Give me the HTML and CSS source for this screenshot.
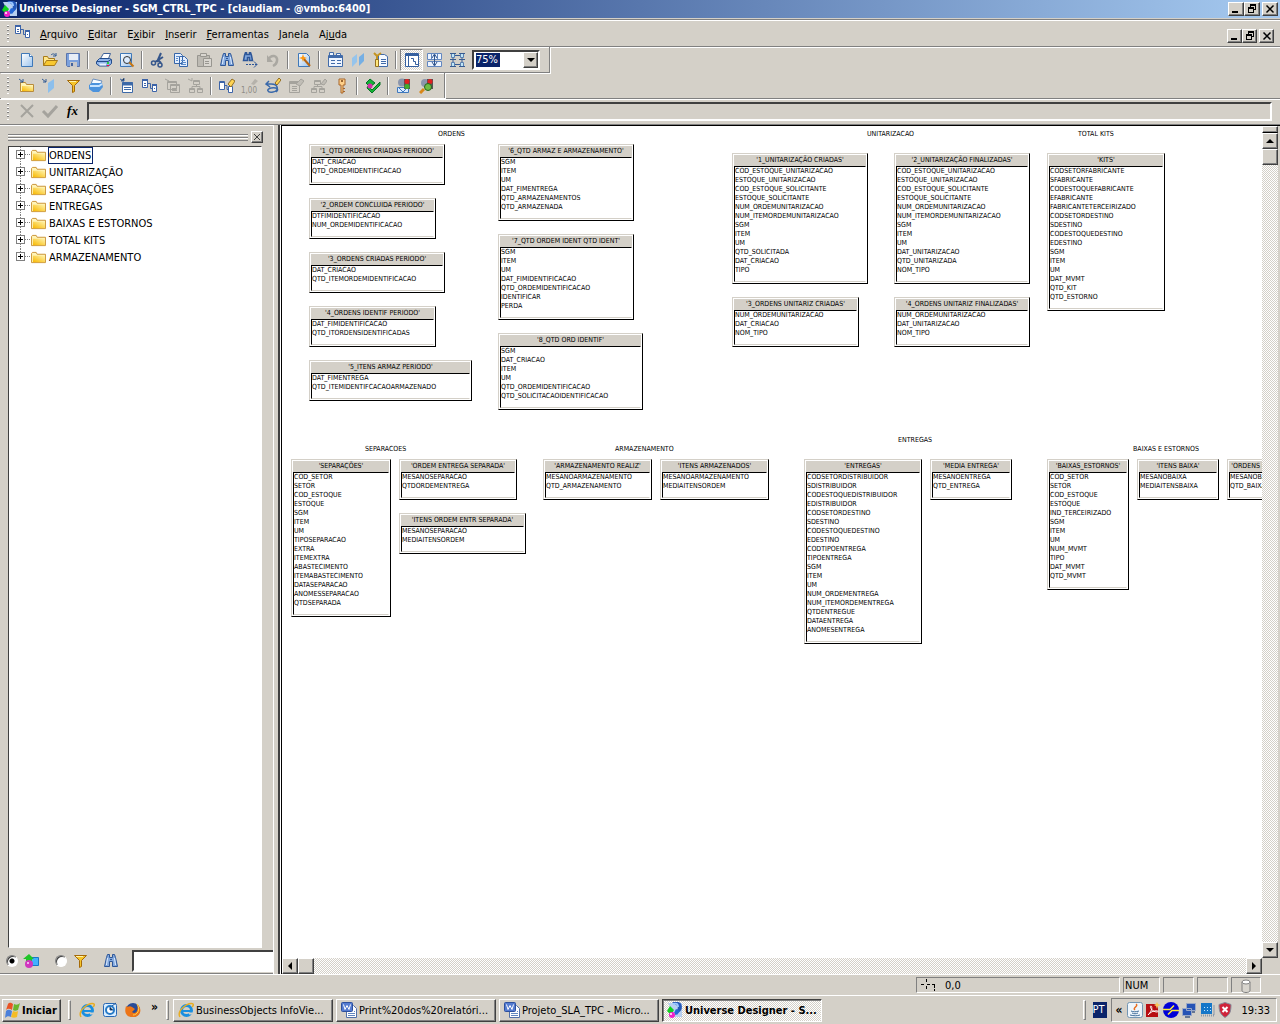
FILE: index.html
```html
<!DOCTYPE html>
<html lang="pt-BR">
<head>
<meta charset="utf-8">
<title>Universe Designer - SGM_CTRL_TPC</title>
<link rel="stylesheet" href="styles.css">
</head>
<body>
<svg class="defs" aria-hidden="true">
  <defs>
    <linearGradient id="gold" x1="0" y1="1" x2="1" y2="0"><stop offset="0" stop-color="#f8b800"/><stop offset="1" stop-color="#fff4b0"/></linearGradient>
    <linearGradient id="sky" x1="0" y1="0" x2="1" y2="1"><stop offset="0" stop-color="#fff"/><stop offset="1" stop-color="#9cc4ee"/></linearGradient>
    <symbol id="i-app" viewBox="0 0 16 16"><path d="M1 1h14v14H8z" fill="#b8d0f0"/><path d="M5 0h6c5 0 5 9 1 10l-4 3V9c3 0 4-5 1-6z" fill="#2458b8"/><path d="M6 2c4-1 5 0 5 3" stroke="#9cc8ff" stroke-width="2" fill="none"/><path d="M3 4l4 4-3 5-4-4z" fill="#10d020"/><path d="M9 7l4 2-3 4-3-2z" fill="#2468d8"/><circle cx="5" cy="13" r="3" fill="#f020c8"/><circle cx="4" cy="12" r="1" fill="#fff"/></symbol>
    <symbol id="i-schema" viewBox="0 0 16 16"><path d="M.5 1.500h5v8h-5zM10.500 6.500h4v7h-4z" fill="#fff" stroke="#3d64a8"/><path d="M0 2h6M10 7h5" stroke="#3d64a8" stroke-width="2"/><path d="M6 5.500h2.500v5H10M2 5.500h2M2 7.500h2M12 10.500h1" stroke="#3d64a8" fill="none"/></symbol>
    <symbol id="i-new" viewBox="0 0 16 16"><path d="M2.500 1.500h8l3 3v10h-11z" fill="url(#sky)" stroke="#3f78b8"/><path d="M10.500 1.500v3h3" fill="#fff" stroke="#3f78b8"/></symbol>
    <symbol id="i-open" viewBox="0 0 16 16"><path d="M1.500 13.500v-9h4l1 2h6v2" fill="#ffe68a" stroke="#a87a18"/><path d="M1.500 13.500l3-5h11l-3 5z" fill="#f8c830" stroke="#a87a18"/><path d="M9 3c2-2 4-1 5 1m0-3v3h-3" stroke="#315a94" fill="none"/></symbol>
    <symbol id="i-save" viewBox="0 0 16 16"><path d="M1.500 1.500h13v13h-12l-1-1z" fill="#7ba0dc" stroke="#5b75ac"/><path d="M4 2h9v6H4z" fill="#e7edf7"/><path d="M5 10h7v5H5z" fill="#c7c7ca"/><path d="M6 11h2v3H6z" fill="#42629d"/></symbol>
    <symbol id="i-print" viewBox="0 0 16 16"><path d="M4.500 6.500l3-5h7l-2 5z" fill="#fff" stroke="#3c6098"/><path d="M.5 9.500l3-3h10l2 1v4l-3 2.500h-9l-3-2z" fill="#8fb4ea" stroke="#244d8c"/><path d="M1 9.500h11l3-2" stroke="#244d8c" fill="none"/><path d="M3 11.500h7v2H4z" fill="#e7f2ff"/><path d="M11 10h2v2h-2z" fill="#2bc944"/><path d="M11 13.500h2" stroke="#f04"/></symbol>
    <symbol id="i-preview" viewBox="0 0 16 16"><path d="M1.500 1.500h11v13h-11z" fill="url(#sky)" stroke="#3f78b8"/><circle cx="8" cy="8" r="3.500" fill="#dcecff" stroke="#333"/><path d="M10.500 10.500l4 4" stroke="#c87610" stroke-width="2"/></symbol>
    <symbol id="i-cut" viewBox="0 0 16 16"><path d="M11 1L7 10M13 5L5 10M8 8l3 3" stroke="#36568b" stroke-width="2" fill="none"/><circle cx="3.500" cy="11" r="2" fill="none" stroke="#36568b" stroke-width="1.500"/><circle cx="10" cy="13" r="2" fill="none" stroke="#36568b" stroke-width="1.500"/></symbol>
    <symbol id="i-copy" viewBox="0 0 16 16"><path d="M1.500 1.500h6l2 2v8h-8zM6.500 4.500h5l3 3v7h-8z" fill="#e4efff" stroke="#3565a9"/><path d="M8 8.500h4M8 10.500h5M8 12.500h5M3 4.500h3M3 6.500h2M3 8.500h2" stroke="#5b8ccb"/></symbol>
    <symbol id="i-paste" viewBox="0 0 16 16"><path d="M1.500 3.500h12v11h-12z" fill="#bdbab3" stroke="#989690"/><path d="M4.500 1.500h6v3h-6z" fill="#d9d6d0" stroke="#989690"/><path d="M7.500 6.500h8v8h-8z" fill="#d9d6d0" stroke="#989690"/><path d="M9 9.500h4M9 11.500h4" stroke="#989690"/></symbol>
    <symbol id="i-find" viewBox="0 0 16 16"><path d="M4.500 1.500h2v3h3v-3h2l1 3 2 9h-5v-5h-3v5h-5l2-9z" fill="#83a9de" stroke="#2d5698"/><path d="M4.500 5l-1 7M11.500 5l1 7" stroke="#e0edff"/><path d="M7 6.500h2" stroke="#2d5698"/></symbol>
    <symbol id="i-findnext" viewBox="0 0 16 16"><path d="M3.500.5h1v2h3v-2h1l1 3 1 5h-3v-3h-2v3h-4l1-5z" fill="#83a9de" stroke="#2d5698" stroke-width="1.500"/><path d="M4 12.500h11" stroke="#2d5698" stroke-dasharray="2 1"/><path d="M12 9.500l3 3-3 3" stroke="#2d5698" fill="none"/></symbol>
    <symbol id="i-undo" viewBox="0 0 16 16"><path d="M3 8c3-6 10-5 9 1-.4 3-2 4-4 5" fill="none" stroke="#aaa8a2" stroke-width="2.500"/><path d="M2 3v7h6z" fill="#aaa8a2"/></symbol>
    <symbol id="i-wizard" viewBox="0 0 16 16"><path d="M2.500 1.500h8l3 3v10h-11z" fill="url(#sky)" stroke="#3f78b8"/><path d="M7 6l7 8" stroke="#b56512" stroke-width="2"/><path d="M7 2l1 3 3 1-3 1-1 3-1-3-3-1 3-1z" fill="#ff9810"/></symbol>
    <symbol id="i-params" viewBox="0 0 16 16"><path d="M1.500 3.500h14v11h-14zM2.500.5h4v3h-4zM9.500 1.500h4v2h-4z" fill="#eef5ff" stroke="#416ba9"/><path d="M2 5h13" stroke="#416ba9" stroke-width="2"/><path d="M4 8.500h4M10 8.500h4M4 11.500h4M10 11.500h4" stroke="#416ba9"/></symbol>
    <symbol id="i-planes" viewBox="0 0 16 16"><path d="M2 6l5-4v8l-5 5z" fill="#95c4ec"/><path d="M9 5l5-4v8l-5 5z" fill="#75afe4"/></symbol>
    <symbol id="i-list" viewBox="0 0 16 16"><path d="M5.500 2.500h6l3 2v10h-9z" fill="#f5f9ff" stroke="#416ba9"/><path d="M8 7.500h5M8 9.500h5M8 11.500h5" stroke="#416ba9"/><path d="M1 1l3 3 4-3M4 4v3" stroke="#c49422" stroke-width="2" fill="none"/><path d="M2.500 7.500h3v7h-3z" fill="#ffe77b" stroke="#947020"/></symbol>
    <symbol id="i-layout" viewBox="0 0 16 16"><path d="M1.500 1.500h13v13h-13z" fill="#fff" stroke="#36609f"/><path d="M2 3h12" stroke="#36609f" stroke-width="2"/><path d="M4.500 4v10M7 6.500h2.500v3h2v3H14" fill="none" stroke="#36609f"/></symbol>
    <symbol id="i-split" viewBox="0 0 16 16"><path d="M.5 1.500h14v6H.5zM.5 9.500h14v5H.5z" fill="#edf4ff" stroke="#6287c0"/><path d="M4.500 2v5M10.500 2v5" stroke="#6287c0"/><path d="M7.500 3v10M5 6l2.500-4L10 6M5 10l2.500 4L10 10" stroke="#31558d" fill="none"/></symbol>
    <symbol id="i-arrange" viewBox="0 0 16 16"><path d="M1.500 1.500h3v4h-3zM10.500 1.500h3v4h-3zM1.500 10.500h3v4h-3zM10.500 10.500h3v4h-3z" fill="#bfe6f7" stroke="#5c80b0"/><path d="M0 1.500h6M9 1.500h6M0 14.500h6M9 14.500h6M5 3.500h5M5 12.500h5M3 6v4M12 6v4M0 7.500h6M9 7.500h6" stroke="#365b91"/></symbol>
    <symbol id="i-folder" viewBox="0 0 16 16"><path d="M1.500 13.500v-9h5l1 2h7v7z" fill="#fff4b8" stroke="#b98b3a"/><path d="M3 8h11v5H3z" fill="url(#gold)"/><path d="M0 1l4 3M4 1v3H1" stroke="#315a94" fill="none"/></symbol>
    <symbol id="i-tree" viewBox="0 0 16 14"><path d="M.5 12.500v-10l1-1h4l1 2h9v9z" fill="#fff4b8" stroke="#c89030"/><path d="M2 5h13v7H2z" fill="url(#gold)"/></symbol>
    <symbol id="i-plane" viewBox="0 0 16 16"><path d="M6 5l6-4v9l-6 5z" fill="#8cbfec"/><path d="M0 1l4 3M4 1v3H1" stroke="#315a94" fill="none"/></symbol>
    <symbol id="i-funnel" viewBox="0 0 16 16"><path d="M2.500 2.500h12l-5 5v6l-2 1v-7z" fill="#f6c52b" stroke="#a56a08"/><path d="M4 3.500h7" stroke="#fff3ad"/></symbol>
    <symbol id="i-cube" viewBox="0 0 16 16"><path d="M5 1l9 2-2 4-9-1z" fill="#f7fbff" stroke="#6b8fbd"/><path d="M1 7l3-2h10l1 4-4 5H5l-4-3z" fill="#4c93dd"/><path d="M2 8h9l3-2" stroke="#c8e4ff" stroke-width="2" fill="none"/></symbol>
    <symbol id="i-table" viewBox="0 0 16 16"><path d="M3.500 4.500h10v10h-10z" fill="#fff" stroke="#3c69a8"/><path d="M3 6h11" stroke="#3c69a8" stroke-width="3"/><path d="M5 9.500h7M5 11.500h7M1 1l4 2M5 0v3H2" stroke="#3c69a8"/></symbol>
    <symbol id="i-tableoff" viewBox="0 0 16 16"><path d="M2.500 3.500h9v8h-9zM5.500 6.500h9v8h-9z" fill="#d4d0c8" stroke="#a5a39d"/><path d="M5 7.500h9M7 10.500h5M7 12.500h5M0 1l4 2M3 4.500h8" stroke="#a5a39d"/></symbol>
    <symbol id="i-treeoff" viewBox="0 0 16 16"><path d="M5.500 2.500h6v4h-6zM1.500 10.500h5v4h-5zM9.500 10.500h5v4h-5z" fill="#d4d0c8" stroke="#a5a39d"/><path d="M8.500 7v1.500M4 10V8.500h8V10M0 1l4 2M4 0v3M5 3.500h7M1 11.500h6M9 11.500h6" fill="none" stroke="#a5a39d"/></symbol>
    <symbol id="i-joinwiz" viewBox="0 0 16 16"><path d="M.5 3.500h5v8h-5zM9.500 8.500h4v6h-4z" fill="#fff" stroke="#3d64a8"/><path d="M0 4.500h6M6 7.500h2v4h2" stroke="#3d64a8" fill="none"/><path d="M9 6l4-5 3 2-4 6z" fill="#ffd452" stroke="#926e24"/></symbol>
    <symbol id="i-aliaswiz" viewBox="0 0 16 16"><path d="M1.500 3.500h10v11h-10z" fill="#d4d0c8" stroke="#a5a39d"/><path d="M2 5h9" stroke="#a5a39d" stroke-width="2"/><path d="M4 8.500h5M4 10.500h5M4 12.500h5" stroke="#a5a39d"/><path d="M8 6l5-5 3 2-4 5z" fill="#c0bdb6" stroke="#a5a39d"/></symbol>
    <symbol id="i-contextwiz" viewBox="0 0 16 16"><path d="M3.500 2.500h6v4h-6zM.5 10.500h5v4h-5zM8.500 10.500h5v4h-5z" fill="#d4d0c8" stroke="#a5a39d"/><path d="M6.500 7v1.500M3 10V8.500h8V10M3 3.500h7M0 11.500h6M8 11.500h6" fill="none" stroke="#a5a39d"/><path d="M10 6l4-5 2 2-3 4z" fill="#c0bdb6" stroke="#a5a39d"/></symbol>
    <symbol id="i-loop" viewBox="0 0 16 16"><path d="M4 3L1 6l4 3M2 6h4c8 0 8 7 2 8s-7-3-2-4 9 1 5 4" stroke="#3a69aa" stroke-width="1.500" fill="none"/><path d="M10 5l4-5 2 2-4 5z" fill="#ffd452" stroke="#926e24"/></symbol>
    <symbol id="i-key" viewBox="0 0 16 16"><path d="M5 1h6v6H9v8H7V7H5z" fill="#ffd08a" stroke="#a7662c"/><circle cx="8" cy="3" r="1" fill="#7a4210"/><path d="M9 10.500h2M9 13.500h2" stroke="#a7662c"/></symbol>
    <symbol id="i-check" viewBox="0 0 16 16"><path d="M5 1l5 4-5 4-4-4z" fill="#14b43a" stroke="#087028"/><path d="M3 8l4 4 8-8v3l-8 8-5-5z" fill="#16b334" stroke="#087028"/><circle cx="5" cy="8" r="2.500" fill="#d42faa"/></symbol>
    <symbol id="i-users" viewBox="0 0 16 16"><circle cx="6" cy="4.500" r="4" fill="#8c96ac"/><path d="M1.500 9.500h11v5h-11z" fill="#d9eaff" stroke="#3f79bd"/><path d="M3 10l4 4 4-4" stroke="#3f79bd" fill="none"/><path d="M8 1h6v10H8z" fill="#555"/><circle cx="11" cy="3.500" r="2.500" fill="#e02020"/><circle cx="11" cy="8.500" r="2.500" fill="#42ae2c"/></symbol>
    <symbol id="i-users2" viewBox="0 0 16 16"><circle cx="6" cy="5" r="4" fill="#8c96ac"/><path d="M8 1h6v10H8z" fill="#555"/><circle cx="11" cy="3.500" r="2.500" fill="#e02020"/><circle cx="9" cy="9" r="3.500" fill="#70bc45" stroke="#27651e"/><path d="M5 11l-4 4" stroke="#d88818" stroke-width="3"/></symbol>
    <symbol id="i-objects" viewBox="0 0 16 16"><path d="M7.500 4.500h8v8h-8z" fill="#42b0ff" stroke="#1677c8"/><path d="M6 1l5 5H9v3H3V6H0z" fill="#20c528"/><circle cx="6" cy="11" r="4" fill="#d035be"/><circle cx="5" cy="10" r="1" fill="#ffd0ff"/></symbol>
    <symbol id="i-ie" viewBox="0 0 16 16"><circle cx="8.500" cy="8.500" r="5" fill="none" stroke="#1a8fe0" stroke-width="3"/><path d="M5 9h9" stroke="#1a8fe0" stroke-width="2"/><path d="M11 10.500h4v2h-4z" fill="#d4d0c8"/><path d="M2 15C-2 8 12-1 15 2c1 1 0 2-1 3" fill="none" stroke="#e9ad22" stroke-width="1.500"/></symbol>
    <symbol id="i-mail" viewBox="0 0 16 16"><rect x="1.500" y="1.500" width="13" height="13" rx="2" fill="#d8edff" stroke="#2868b5"/><circle cx="8" cy="8" r="4" fill="#fff" stroke="#277ac6" stroke-width="2"/><path d="M8 5v3h3M10 4l4-3" stroke="#185299"/></symbol>
    <symbol id="i-fox" viewBox="0 0 16 16"><circle cx="8" cy="8" r="7" fill="#294c98"/><path d="M1 4c2 2 3-1 6 1l3 2-3 3c4 3 7-2 5-8 7 6 2 14-5 13C1 15-1 10 1 4z" fill="#ed7518"/><path d="M12 2c4 6 0 11-4 11" stroke="#ffd34e" fill="none"/></symbol>
    <symbol id="i-word" viewBox="0 0 16 16"><path d="M5.500 3.500h7l3 3v9h-10z" fill="#fff" stroke="#5270a8"/><path d="M7 11.500h7M7 13.500h7M13 9.500h1" stroke="#6287bf"/><rect x=".5" y=".5" width="11" height="9" rx="1" fill="#547bd0" stroke="#2d509c"/><path d="M2.500 2.500l1.500 5 2-4 2 4 1.500-5" fill="none" stroke="#fff"/></symbol>
    <symbol id="i-win" viewBox="0 0 16 16"><path d="M3 2c2-2 3-1 5 0L7 8C5 7 3 6 1 8z" fill="#e95424"/><path d="M9 2c2 1 4 1 6-1l-2 7c-2 1-4 1-5 0z" fill="#6ab52c"/><path d="M1 9c2-2 4-1 6 0l-1 6c-2-1-4-1-6 1z" fill="#4b80da"/><path d="M8 9c2 1 4 1 5 0l-1 6c-2 1-4 1-6 0z" fill="#f5bc25"/></symbol>
    <symbol id="i-java" viewBox="0 0 16 16"><rect x=".5" y=".5" width="15" height="15" rx="2" fill="#eef5fb" stroke="#7496b3"/><path d="M9 2c3 2-4 4-1 6" stroke="#e86d20" stroke-width="1.500" fill="none"/><path d="M4 9c2 1 5 1 8 0M5 11c2 1 4 1 6 0M3 13c4 1 7 1 10 0" stroke="#426f9a" fill="none"/></symbol>
    <symbol id="i-pdf" viewBox="0 0 16 16"><path d="M1 2h12v13H1z" fill="#b70e12"/><path d="M3 13c5-5 4-9 3-9-2 0 1 6 6 6 2 0 1-2-2-1-3 0-5 2-7 4z" fill="none" stroke="#fff"/><path d="M12 0l1 2 3 1-3 1-1 3-1-3-2-1 2-1z" fill="#f9c75d"/></symbol>
    <symbol id="i-blue" viewBox="0 0 16 16"><circle cx="8" cy="8" r="8" fill="#0000d8"/><path d="M0 7.500h7l4-4M5 12.500l4-4h7" stroke="#ffec38" stroke-width="1.500" fill="none"/></symbol>
    <symbol id="i-net" viewBox="0 0 16 16"><path d="M5.500 1.500h9v7h-9zM1.500 6.500h9v7h-9z" fill="#2653b5" stroke="#9aa8c6"/><path d="M4 15h5M11 10h3" stroke="#657694" stroke-width="2"/></symbol>
    <symbol id="i-chip" viewBox="0 0 16 16"><path d="M2 1h11v11H2z" fill="#1577c8"/><path d="M2 13.500h13V3" stroke="#8a98a8" stroke-dasharray="1 1" stroke-width="2" fill="none"/><path d="M5 5.500h1M8 5.500h1M11 5.500h1M5 8.500h1M8 8.500h1M11 8.500h1" stroke="#c3e6ff"/></symbol>
    <symbol id="i-shield" viewBox="0 0 16 16"><path d="M8 .5l6 2c0 7-1 10-6 13C3 12 2 9 2 2.500z" fill="#cf2339" stroke="#858b99"/><path d="M5.500 5l5 5M10.500 5l-5 5" stroke="#fff" stroke-width="2"/></symbol>
    <symbol id="i-min" viewBox="0 0 12 10"><path d="M2 7h6v2H2z"/></symbol>
    <symbol id="i-restore" viewBox="0 0 12 10"><path d="M4 0h6v6H8v3H2V3h2zm1 2v1h3v2h1V2zM3 5v3h4V5z" fill-rule="evenodd"/></symbol>
    <symbol id="i-close" viewBox="0 0 12 10"><path d="M2.500 1.500l7 7M9.500 1.500l-7 7" stroke="#000" stroke-width="1.500"/></symbol>
    <symbol id="i-up" viewBox="0 0 8 8"><path d="M4 2l4 4H0z"/></symbol>
    <symbol id="i-down" viewBox="0 0 8 8"><path d="M0 2h8L4 6z"/></symbol>
    <symbol id="i-left" viewBox="0 0 8 8"><path d="M2 4l4-4v8z"/></symbol>
    <symbol id="i-right" viewBox="0 0 8 8"><path d="M6 4L2 0v8z"/></symbol>
  </defs>
</svg>

<header class="titlebar">
  <svg class="ico"><use href="#i-app"/></svg>
  <h1>Universe Designer - SGM_CTRL_TPC - [claudiam - @vmbo:6400]</h1>
  <div class="winbtns">
    <button aria-label="Minimizar"><svg><use href="#i-min"/></svg></button><button aria-label="Restaurar"><svg><use href="#i-restore"/></svg></button><button class="x" aria-label="Fechar"><svg><use href="#i-close"/></svg></button>
  </div>
</header>

<nav class="menubar">
  <span class="grip"></span>
  <svg class="ico"><use href="#i-schema"/></svg>
  <button><u>A</u>rquivo</button><button><u>E</u>ditar</button><button>E<u>x</u>ibir</button><button><u>I</u>nserir</button><button><u>F</u>erramentas</button><button><u>J</u>anela</button><button>Aj<u>u</u>da</button>
  <div class="winbtns">
    <button aria-label="Minimizar documento"><svg><use href="#i-min"/></svg></button><button aria-label="Restaurar documento"><svg><use href="#i-restore"/></svg></button><button class="x" aria-label="Fechar documento"><svg><use href="#i-close"/></svg></button>
  </div>
</nav>

<div class="toolbars">
  <div class="toolbar" role="toolbar" aria-label="Padrão">
    <span class="grip"></span>
    <button class="tool" aria-label="Novo"><svg class="ico"><use href="#i-new"/></svg></button>
    <button class="tool" aria-label="Abrir"><svg class="ico"><use href="#i-open"/></svg></button>
    <button class="tool" aria-label="Salvar"><svg class="ico"><use href="#i-save"/></svg></button>
    <span class="sep"></span>
    <button class="tool" aria-label="Imprimir"><svg class="ico"><use href="#i-print"/></svg></button>
    <button class="tool" aria-label="Visualizar impressão"><svg class="ico"><use href="#i-preview"/></svg></button>
    <span class="sep"></span>
    <button class="tool" aria-label="Recortar"><svg class="ico"><use href="#i-cut"/></svg></button>
    <button class="tool" aria-label="Copiar"><svg class="ico"><use href="#i-copy"/></svg></button>
    <button class="tool" aria-label="Colar"><svg class="ico"><use href="#i-paste"/></svg></button>
    <button class="tool" aria-label="Localizar"><svg class="ico"><use href="#i-find"/></svg></button>
    <button class="tool" aria-label="Localizar próximo"><svg class="ico"><use href="#i-findnext"/></svg></button>
    <button class="tool" aria-label="Desfazer"><svg class="ico"><use href="#i-undo"/></svg></button>
    <span class="sep"></span>
    <button class="tool" aria-label="Assistente"><svg class="ico"><use href="#i-wizard"/></svg></button>
    <span class="sep"></span>
    <button class="tool" aria-label="Parâmetros"><svg class="ico"><use href="#i-params"/></svg></button>
    <button class="tool" aria-label="Contextos"><svg class="ico"><use href="#i-planes"/></svg></button>
    <button class="tool" aria-label="Lista de valores"><svg class="ico"><use href="#i-list"/></svg></button>
    <span class="sep"></span>
    <button class="tool pressed" aria-label="Painel do universo"><svg class="ico"><use href="#i-layout"/></svg></button>
    <button class="tool" aria-label="Dividir"><svg class="ico"><use href="#i-split"/></svg></button>
    <button class="tool" aria-label="Organizar tabelas"><svg class="ico"><use href="#i-arrange"/></svg></button>
    <div class="combo"><select aria-label="Zoom"><option>75%</option></select><span class="arrow"><svg><use href="#i-down"/></svg></span></div>
  </div>
  <div class="toolbar second" role="toolbar" aria-label="Edição">
    <span class="grip"></span>
    <button class="tool" aria-label="Inserir classe"><svg class="ico"><use href="#i-folder"/></svg></button>
    <button class="tool" aria-label="Inserir objeto"><svg class="ico"><use href="#i-plane"/></svg></button>
    <button class="tool" aria-label="Inserir condição"><svg class="ico"><use href="#i-funnel"/></svg></button>
    <button class="tool" aria-label="Hierarquias"><svg class="ico"><use href="#i-cube"/></svg></button>
    <span class="sep"></span>
    <button class="tool" aria-label="Inserir tabela"><svg class="ico"><use href="#i-table"/></svg></button>
    <button class="tool" aria-label="Inserir junção"><svg class="ico"><use href="#i-schema"/></svg></button>
    <button class="tool" aria-label="Inserir alias"><svg class="ico"><use href="#i-tableoff"/></svg></button>
    <button class="tool" aria-label="Inserir contexto"><svg class="ico"><use href="#i-treeoff"/></svg></button>
    <span class="sep"></span>
    <button class="tool" aria-label="Detectar junções"><svg class="ico"><use href="#i-joinwiz"/></svg></button>
    <button class="tool" aria-label="Detectar cardinalidades"><svg class="ico" viewBox="0 0 16 16"><text class="card" x="-1" y="15">1,00</text><path d="M9 6l4-5 3 2-4 4z" fill="#b5b2ab"/></svg></button>
    <button class="tool" aria-label="Detectar loops"><svg class="ico"><use href="#i-loop"/></svg></button>
    <button class="tool" aria-label="Detectar alias"><svg class="ico"><use href="#i-aliaswiz"/></svg></button>
    <button class="tool" aria-label="Detectar contextos"><svg class="ico"><use href="#i-contextwiz"/></svg></button>
    <button class="tool" aria-label="Chaves"><svg class="ico"><use href="#i-key"/></svg></button>
    <span class="sep"></span>
    <button class="tool" aria-label="Verificar integridade"><svg class="ico"><use href="#i-check"/></svg></button>
    <span class="sep"></span>
    <button class="tool" aria-label="Usuários"><svg class="ico"><use href="#i-users"/></svg></button>
    <button class="tool" aria-label="Restrições"><svg class="ico"><use href="#i-users2"/></svg></button>
  </div>
</div>

<div class="formula">
  <span class="grip"></span>
  <button class="tool" aria-label="Cancelar"><svg class="ico" viewBox="0 0 16 16"><path d="M2 2l12 12M14 2L2 14" stroke="#a5a39d" stroke-width="2"/></svg></button>
  <button class="tool" aria-label="Confirmar"><svg class="ico" viewBox="0 0 16 16"><path d="M1 8l5 5 9-10" stroke="#a5a39d" stroke-width="3" fill="none"/></svg></button>
  <button class="tool fx" aria-label="Fórmula"><i>fx</i></button>
  <input type="text" aria-label="Barra de fórmula">
</div>

<main class="workspace">
  <aside class="side">
    <div class="panelhead"><span class="bars"></span><button aria-label="Fechar painel"><svg viewBox="0 0 8 8"><path d="M1 1l6 6M7 1L1 7" stroke="#404040"/></svg></button></div>
    <ul class="tree">
      <li><span class="plus"></span><svg class="fold"><use href="#i-tree"/></svg><span class="name focus">ORDENS</span></li>
      <li><span class="plus"></span><svg class="fold"><use href="#i-tree"/></svg><span class="name">UNITARIZAÇÃO</span></li>
      <li><span class="plus"></span><svg class="fold"><use href="#i-tree"/></svg><span class="name">SEPARAÇÕES</span></li>
      <li><span class="plus"></span><svg class="fold"><use href="#i-tree"/></svg><span class="name">ENTREGAS</span></li>
      <li><span class="plus"></span><svg class="fold"><use href="#i-tree"/></svg><span class="name">BAIXAS E ESTORNOS</span></li>
      <li><span class="plus"></span><svg class="fold"><use href="#i-tree"/></svg><span class="name">TOTAL KITS</span></li>
      <li><span class="plus"></span><svg class="fold"><use href="#i-tree"/></svg><span class="name">ARMAZENAMENTO</span></li>
    </ul>
    <form class="filter">
      <label><input type="radio" name="view" aria-label="Classes e objetos" checked><svg class="ico"><use href="#i-objects"/></svg></label>
      <label><input type="radio" name="view" aria-label="Classes e condições"><svg class="ico"><use href="#i-funnel"/></svg></label>
      <svg class="ico"><use href="#i-find"/></svg>
      <input type="text" aria-label="Localizar">
    </form>
  </aside>
  <div class="splitter"></div>
  <section class="view">
    <div class="canvas">
      <h2 style="left:156px;top:4px">ORDENS</h2>
      <h2 style="left:585px;top:4px">UNITARIZACAO</h2>
      <h2 style="left:796px;top:4px">TOTAL KITS</h2>
      <h2 style="left:83px;top:319px">SEPARACOES</h2>
      <h2 style="left:333px;top:319px">ARMAZENAMENTO</h2>
      <h2 style="left:616px;top:310px">ENTREGAS</h2>
      <h2 style="left:851px;top:319px">BAIXAS E ESTORNOS</h2>

      <article style="left:27px;top:18px;width:136px"><h3>'1_QTD ORDENS CRIADAS PERIODO'</h3><ul><li>DAT_CRIACAO<li>QTD_ORDEMIDENTIFICACAO</ul></article>
      <article style="left:27px;top:72px;width:127px"><h3>'2_ORDEM CONCLUIDA PERIODO'</h3><ul><li>DTFIMIDENTIFICACAO<li>NUM_ORDEMIDENTIFICACAO</ul></article>
      <article style="left:27px;top:126px;width:136px"><h3>'3_ORDENS CRIADAS PERIODO'</h3><ul><li>DAT_CRIACAO<li>QTD_ITEMORDEMIDENTIFICACAO</ul></article>
      <article style="left:27px;top:180px;width:127px"><h3>'4_ORDENS IDENTIF PERIODO'</h3><ul><li>DAT_FIMIDENTIFICACAO<li>QTD_ITORDENSIDENTIFICADAS</ul></article>
      <article style="left:27px;top:234px;width:163px"><h3>'5_ITENS ARMAZ PERIODO'</h3><ul><li>DAT_FIMENTREGA<li>QTD_ITEMIDENTIFCACAOARMAZENADO</ul></article>
      <article style="left:216px;top:18px;width:136px"><h3>'6_QTD ARMAZ E ARMAZENAMENTO'</h3><ul><li>SGM<li>ITEM<li>UM<li>DAT_FIMENTREGA<li>QTD_ARMAZENAMENTOS<li>QTD_ARMAZENADA</ul></article>
      <article style="left:216px;top:108px;width:136px"><h3>'7_QTD ORDEM IDENT QTD IDENT'</h3><ul><li>SGM<li>ITEM<li>UM<li>DAT_FIMIDENTIFICACAO<li>QTD_ORDEMIDENTIFICACAO<li>IDENTIFICAR<li>PERDA</ul></article>
      <article style="left:216px;top:207px;width:145px"><h3>'8_QTD ORD IDENTIF'</h3><ul><li>SGM<li>DAT_CRIACAO<li>ITEM<li>UM<li>QTD_ORDEMIDENTIFICACAO<li>QTD_SOLICITACAOIDENTIFICACAO</ul></article>

      <article style="left:450px;top:27px;width:136px"><h3>'1_UNITARIZAÇÃO CRIADAS'</h3><ul><li>COD_ESTOQUE_UNITARIZACAO<li>ESTOQUE_UNITARIZACAO<li>COD_ESTOQUE_SOLICITANTE<li>ESTOQUE_SOLICITANTE<li>NUM_ORDEMUNITARIZACAO<li>NUM_ITEMORDEMUNITARIZACAO<li>SGM<li>ITEM<li>UM<li>QTD_SOLICITADA<li>DAT_CRIACAO<li>TIPO</ul></article>
      <article style="left:612px;top:27px;width:136px"><h3>'2_UNITARIZAÇÃO FINALIZADAS'</h3><ul><li>COD_ESTOQUE_UNITARIZACAO<li>ESTOQUE_UNITARIZACAO<li>COD_ESTOQUE_SOLICITANTE<li>ESTOQUE_SOLICITANTE<li>NUM_ORDEMUNITARIZACAO<li>NUM_ITEMORDEMUNITARIZACAO<li>SGM<li>ITEM<li>UM<li>DAT_UNITARIZACAO<li>QTD_UNITARIZADA<li>NOM_TIPO</ul></article>
      <article style="left:450px;top:171px;width:127px"><h3>'3_ORDENS UNITARIZ CRIADAS'</h3><ul><li>NUM_ORDEMUNITARIZACAO<li>DAT_CRIACAO<li>NOM_TIPO</ul></article>
      <article style="left:612px;top:171px;width:136px"><h3>'4_ORDENS UNITARIZ FINALIZADAS'</h3><ul><li>NUM_ORDEMUNITARIZACAO<li>DAT_UNITARIZACAO<li>NOM_TIPO</ul></article>
      <article style="left:765px;top:27px;width:118px"><h3>'KITS'</h3><ul><li>CODSETORFABRICANTE<li>SFABRICANTE<li>CODESTOQUEFABRICANTE<li>EFABRICANTE<li>FABRICANTETERCEIRIZADO<li>CODSETORDESTINO<li>SDESTINO<li>CODESTOQUEDESTINO<li>EDESTINO<li>SGM<li>ITEM<li>UM<li>DAT_MVMT<li>QTD_KIT<li>QTD_ESTORNO</ul></article>

      <article style="left:9px;top:333px;width:100px"><h3>'SEPARAÇÕES'</h3><ul><li>COD_SETOR<li>SETOR<li>COD_ESTOQUE<li>ESTOQUE<li>SGM<li>ITEM<li>UM<li>TIPOSEPARACAO<li>EXTRA<li>ITEMEXTRA<li>ABASTECIMENTO<li>ITEMABASTECIMENTO<li>DATASEPARACAO<li>ANOMESSEPARACAO<li>QTDSEPARADA</ul></article>
      <article style="left:117px;top:333px;width:118px"><h3>'ORDEM ENTREGA SEPARADA'</h3><ul><li>MESANOSEPARACAO<li>QTDORDEMENTREGA</ul></article>
      <article style="left:117px;top:387px;width:127px"><h3>'ITENS ORDEM ENTR SEPARADA'</h3><ul><li>MESANOSEPARACAO<li>MEDIAITENSORDEM</ul></article>
      <article style="left:261px;top:333px;width:109px"><h3>'ARMAZENAMENTO REALIZ'</h3><ul><li>MESANOARMAZENAMENTO<li>QTD_ARMAZENAMENTO</ul></article>
      <article style="left:378px;top:333px;width:109px"><h3>'ITENS ARMAZENADOS'</h3><ul><li>MESANOARMAZENAMENTO<li>MEDIAITENSORDEM</ul></article>
      <article style="left:522px;top:333px;width:118px"><h3>'ENTREGAS'</h3><ul><li>CODSETORDISTRIBUIDOR<li>SDISTRIBUIDOR<li>CODESTOQUEDISTRIBUIDOR<li>EDISTRIBUIDOR<li>CODSETORDESTINO<li>SDESTINO<li>CODESTOQUEDESTINO<li>EDESTINO<li>CODTIPOENTREGA<li>TIPOENTREGA<li>SGM<li>ITEM<li>UM<li>NUM_ORDEMENTREGA<li>NUM_ITEMORDEMENTREGA<li>QTDENTREGUE<li>DATAENTREGA<li>ANOMESENTREGA</ul></article>
      <article style="left:648px;top:333px;width:82px"><h3>'MEDIA ENTREGA'</h3><ul><li>MESANOENTREGA<li>QTD_ENTREGA</ul></article>
      <article style="left:765px;top:333px;width:82px"><h3>'BAIXAS_ESTORNOS'</h3><ul><li>COD_SETOR<li>SETOR<li>COD_ESTOQUE<li>ESTOQUE<li>IND_TERCEIRIZADO<li>SGM<li>ITEM<li>UM<li>NUM_MVMT<li>TIPO<li>DAT_MVMT<li>QTD_MVMT</ul></article>
      <article style="left:855px;top:333px;width:82px"><h3>'ITENS BAIXA'</h3><ul><li>MESANOBAIXA<li>MEDIAITENSBAIXA</ul></article>
      <article style="left:945px;top:333px;width:60px"><h3>'ORDENS BAIXA'</h3><ul><li>MESANOBAIXA<li>QTD_BAIXA</ul></article>
    </div>
    <div class="vbar"><span class="mini"></span><button aria-label="Rolar para cima"><svg><use href="#i-up"/></svg></button><span class="thumb"></span><span class="track"></span><button aria-label="Rolar para baixo"><svg><use href="#i-down"/></svg></button></div>
    <div class="hbar"><button aria-label="Rolar para a esquerda"><svg><use href="#i-left"/></svg></button><span class="thumb"></span><span class="track"></span><button aria-label="Rolar para a direita"><svg><use href="#i-right"/></svg></button></div>
  </section>
</main>

<footer class="status">
  <div class="cell coords"><svg class="ico" viewBox="0 0 16 16"><path d="M0 7.500h4M6 7.500h4M5.500 2v4M5.500 9v4M11 7.500h4M13.500 8v6" stroke="#000" stroke-dasharray="3 1"/></svg>0,0</div>
  <div class="cell num">NUM</div><div class="cell"></div><div class="cell"></div>
  <div class="cell db"><svg class="ico" viewBox="0 0 16 16"><path d="M4 4v9c1 2 7 2 8 0V4" fill="#d8d5ce" stroke="#808080"/><ellipse cx="8" cy="4" rx="4" ry="2" fill="#fff" stroke="#808080"/></svg></div>
</footer>

<footer class="taskbar">
  <button class="start"><svg class="ico"><use href="#i-win"/></svg>Iniciar</button>
  <span class="tsep"></span>
  <div class="quick">
    <a href="#ie" aria-label="Internet Explorer"><svg class="ico"><use href="#i-ie"/></svg></a>
    <a href="#mail" aria-label="Outlook"><svg class="ico"><use href="#i-mail"/></svg></a>
    <a href="#firefox" aria-label="Firefox"><svg class="ico"><use href="#i-fox"/></svg></a>
    <b>»</b>
  </div>
  <span class="tsep"></span>
  <div class="tasks">
    <button><svg class="ico"><use href="#i-ie"/></svg><span>BusinessObjects InfoVie...</span></button>
    <button><svg class="ico"><use href="#i-word"/></svg><span>Print%20dos%20relatóri...</span></button>
    <button><svg class="ico"><use href="#i-word"/></svg><span>Projeto_SLA_TPC - Micro...</span></button>
    <button class="active"><svg class="ico"><use href="#i-app"/></svg><span>Universe Designer - S...</span></button>
  </div>
  <span class="tsep"></span>
  <span class="lang">PT</span>
  <div class="tray">
    <b>«</b>
    <svg class="ico"><use href="#i-java"/></svg><svg class="ico"><use href="#i-pdf"/></svg><svg class="ico"><use href="#i-blue"/></svg><svg class="ico"><use href="#i-net"/></svg><svg class="ico"><use href="#i-chip"/></svg><svg class="ico"><use href="#i-shield"/></svg>
    <time>19:33</time>
  </div>
</footer>
</body>
</html>
```
FILE: styles.css
```css
:root {
  --face: #d4d0c8;
  --shade: #808080;
  --dark: #404040;
  --dither: repeating-conic-gradient(#d4d0c8 0 25%, #fff 0 50%) 0 0 / 2px 2px;
}
* { box-sizing: border-box; }
body {
  margin: 0;
  height: 100vh;
  display: flex;
  flex-direction: column;
  overflow: hidden;
  background: var(--face);
  color: #000;
  font: 11px/13px "DejaVu Sans Condensed", "DejaVu Sans", sans-serif;
}
button, input, select { font: inherit; color: inherit; margin: 0; padding: 0; border: 0; background: none; border-radius: 0; }
ul { list-style: none; margin: 0; padding: 0; }
h1, h2, h3 { margin: 0; font-size: inherit; }
.defs { position: absolute; width: 0; height: 0; }
.ico { width: 16px; height: 16px; flex: none; display: block; overflow: visible; }
.card { font-size: 8px; fill: #8f8d87; }

/* raised and sunken frames */
.winbtns button, .vbar button, .hbar button, .thumb, .mini, .arrow, .start, .tasks button, .panelhead button {
  background: var(--face);
  border: 1px solid;
  border-color: #fff var(--dark) var(--dark) #fff;
  box-shadow: inset -1px -1px var(--shade);
}

.titlebar {
  display: flex;
  align-items: center;
  height: 18px;
  flex: none;
  padding: 0 2px;
  gap: 1px;
  background: linear-gradient(90deg, #0a246a, #a6caf0);
  color: #fff;
}
.titlebar h1 { font-size: 11px; line-height: 18px; font-weight: bold; }
.winbtns { display: flex; margin-left: auto; }
.winbtns button { width: 16px; height: 14px; display: grid; place-items: center; }
.winbtns .x { margin-left: 2px; }
.winbtns svg { width: 12px; height: 10px; display: block; }

.menubar {
  display: flex;
  align-items: center;
  height: 28px;
  flex: none;
  margin-top: 1px;
  padding: 0 6px 0 7px;
  border-top: 1px solid var(--shade);
  border-bottom: 1px solid var(--shade);
  box-shadow: inset 0 1px #fff, 0 1px #fff;
}
.menubar > button { margin-left: 10px; padding-top: 2px; }
.menubar > .ico { margin: 0 -1px 2px 6px; }
.menubar .winbtns { margin-top: 6px; }
.menubar .winbtns button { width: 15px; }
.grip {
  width: 2px;
  height: 17px;
  flex: none;
  background: repeating-linear-gradient(#fff 0 1px, var(--shade) 1px 2px, transparent 2px 4px);
}

.toolbars { flex: none; display: flex; flex-direction: column; align-items: flex-start; border-bottom: 1px solid var(--shade); }
.toolbar {
  display: flex;
  align-items: center;
  height: 26px;
  padding: 0 9px 0 7px;
  border-right: 1px solid var(--shade);
  border-bottom: 1px solid var(--shade);
  box-shadow: 1px 1px #fff;
}
.toolbar.second { height: 25px; padding-right: 6px; border-bottom: 0; }
.toolbar .grip, .formula .grip { margin-right: 6px; }
.tool { width: 23px; height: 22px; display: grid; place-items: center; }
.tool.pressed { background: var(--dither); border: 1px solid; border-color: var(--shade) #fff #fff var(--shade); }
.sep { width: 2px; height: 18px; margin: 0 3px; background: linear-gradient(90deg, var(--shade) 50%, #fff 50%); }
.combo {
  display: flex;
  height: 20px;
  margin-left: 3px;
  background: #fff;
  border: 2px solid;
  border-color: var(--dark) #fff #fff var(--dark);
}
.combo select {
  appearance: none;
  width: 49px;
  padding: 0 20px 0 2px;
  line-height: 16px;
  background: linear-gradient(#0a246a, #0a246a) 2px 1px / 24px 14px no-repeat;
  color: #fff;
  outline: 0;
}
.combo .arrow { width: 15px; display: grid; place-items: center; }
.combo svg, .vbar svg, .hbar svg { width: 8px; height: 8px; display: block; }

.formula {
  display: flex;
  align-items: center;
  height: 26px;
  flex: none;
  padding: 0 8px 2px 7px;
  border-top: 1px solid #fff;
  border-bottom: 1px solid var(--shade);
}
.formula input {
  flex: 1;
  height: 19px;
  margin-left: 3px;
  border: 2px solid;
  border-color: var(--dark) #fff #fff var(--dark);
}
.fx { font: bold 13px/16px "Liberation Serif", serif; }

.workspace { flex: 1; min-height: 0; display: flex; }
.side { width: 273px; flex: none; display: flex; flex-direction: column; border-top: 1px solid #fff; }
.panelhead { display: flex; align-items: center; gap: 3px; height: 20px; padding: 2px 10px 0 8px; flex: none; }
.bars { flex: 1; height: 7px; border: 1px solid var(--shade); border-width: 1px 0; background: linear-gradient(#fff 0 1px, var(--face) 1px 2px, var(--shade) 2px 3px, #fff 3px 4px, var(--face) 4px); }
.panelhead button { width: 12px; height: 12px; display: grid; place-items: center; }
.panelhead svg { width: 8px; height: 8px; }
.tree {
  flex: 1;
  margin: 0 11px 0 8px;
  padding: 0 0 0 7px;
  background: #fff;
  border: 1px solid;
  border-color: var(--dark) #fff #fff var(--dark);
}
.tree li { display: flex; align-items: center; height: 17px; }
.plus {
  width: 15px;
  height: 17px;
  background:
    linear-gradient(#000, #000) 2px 7px / 5px 1px no-repeat,
    linear-gradient(#000, #000) 4px 5px / 1px 5px no-repeat,
    linear-gradient(#fff, #fff) 1px 4px / 7px 7px no-repeat,
    linear-gradient(var(--shade), var(--shade)) 0 3px / 9px 9px no-repeat,
    repeating-linear-gradient(90deg, var(--shade) 0 1px, #fff 1px 2px) 9px 7px / 6px 1px no-repeat,
    repeating-linear-gradient(var(--shade) 0 1px, #fff 1px 2px) 4px 0 / 1px 17px no-repeat;
}
.tree li:last-child .plus { background-size: 5px 1px, 1px 5px, 7px 7px, 9px 9px, 6px 1px, 1px 8px; }
.fold { width: 15px; height: 13px; }
.name { margin-left: 3px; padding: 0 1px 0 0; line-height: 15px; }
.name.focus { outline: 1px solid #0a246a; }
.filter { display: flex; align-items: center; height: 26px; flex: none; padding-left: 6px; border-bottom: 1px solid var(--shade); }
.filter label { display: flex; align-items: center; gap: 5px; margin-right: 16px; }
.filter input[type="radio"] {
  appearance: none;
  width: 12px;
  height: 12px;
  border-radius: 50%;
  border: 1px solid;
  border-color: var(--shade) #fff #fff var(--shade);
  background: #fff;
  box-shadow: inset 1px 1px var(--dark);
}
.filter input[type="radio"]:checked { background: radial-gradient(circle at center, #000 2px, #fff 3px); }
.filter > .ico { margin-left: -1px; }
.filter input[type="text"] {
  flex: 1;
  min-width: 0;
  height: 22px;
  margin-left: 13px;
  background: #fff;
  border: 2px solid;
  border-color: var(--dark) #fff #fff var(--dark);
  border-right: 0;
}
.splitter { width: 8px; flex: none; background: linear-gradient(90deg, #fff 0 1px, var(--face) 1px 5px, var(--dark) 5px 7px, #fff 7px); }

.view {
  flex: 1;
  min-width: 0;
  display: grid;
  grid-template: minmax(0, 1fr) 16px / minmax(0, 1fr) 16px;
  padding-right: 2px;
  border-top: 1px solid #000;
  border-left: 1px solid #000;
}
.canvas {
  position: relative;
  overflow: hidden;
  background: #fff;
  font-size: 7px;
  line-height: 9px;
  white-space: nowrap;
}
.canvas h2 { position: absolute; font-weight: normal; }
article {
  position: absolute;
  padding: 1px;
  background: #fff;
  border: 1px solid;
  border-color: var(--face) #000 #000 var(--face);
}
article h3 { height: 11px; line-height: 11px; font-weight: normal; text-align: center; background: var(--face); }
article ul { border: 1px solid; border-color: #000 #fff var(--face) #000; padding: 0 0 6px 0; }
.vbar { display: flex; flex-direction: column; }
.hbar { display: flex; }
.vbar button, .hbar button, .thumb { width: 16px; height: 16px; flex: none; display: grid; place-items: center; }
.mini { height: 7px; flex: none; border-bottom-color: #000; }
.track { flex: 1; background: var(--dither); }

.status {
  display: flex;
  justify-content: flex-end;
  align-items: center;
  gap: 3px;
  height: 21px;
  flex: none;
  padding-right: 19px;
  border-top: 1px solid #fff;
}
.cell { width: 31px; height: 16px; line-height: 15px; border: 1px solid; border-color: var(--shade) #fff #fff var(--shade); }
.coords { width: 204px; display: flex; align-items: center; gap: 8px; padding-left: 4px; }
.num { width: 37px; padding-left: 1px; }
.db { width: 30px; display: grid; place-items: center; }

.taskbar {
  display: flex;
  align-items: center;
  height: 29px;
  flex: none;
  padding: 0 3px 0 2px;
  border-top: 1px solid #fff;
}
.start { display: flex; align-items: center; gap: 1px; height: 23px; padding: 0 3px 0 2px; font-weight: bold; }
.tsep { width: 3px; height: 20px; flex: none; margin: 0 4px 0 7px; border: 1px solid; border-color: #fff var(--shade) var(--shade) #fff; }
.quick { display: flex; align-items: center; gap: 7px; padding: 0 0 0 4px; }
.quick b { padding: 0 1px 6px 3px; font-size: 12px; }
.tasks { flex: 1; display: flex; gap: 3px; min-width: 0; }
.tasks button { flex: 0 1 160px; min-width: 0; height: 23px; display: flex; align-items: center; gap: 2px; padding: 0 4px; white-space: nowrap; text-align: left; }
.tasks span { overflow: hidden; }
.tasks .active { font-weight: bold; background: var(--dither); border-color: var(--dark) #fff #fff var(--dark); box-shadow: inset 1px 1px var(--shade); }
.lang { margin: 0 4px 0 3px; width: 14px; padding: 2px 0; overflow: hidden; background: #0a246a; color: #fff; line-height: 12px; }
.tray { display: flex; align-items: center; gap: 2px; height: 24px; padding: 0 6px 0 4px; border: 1px solid; border-color: var(--shade) #fff #fff var(--shade); }
.tray b { font-size: 12px; margin-right: 3px; }
.tray time { margin-left: 6px; }
```
